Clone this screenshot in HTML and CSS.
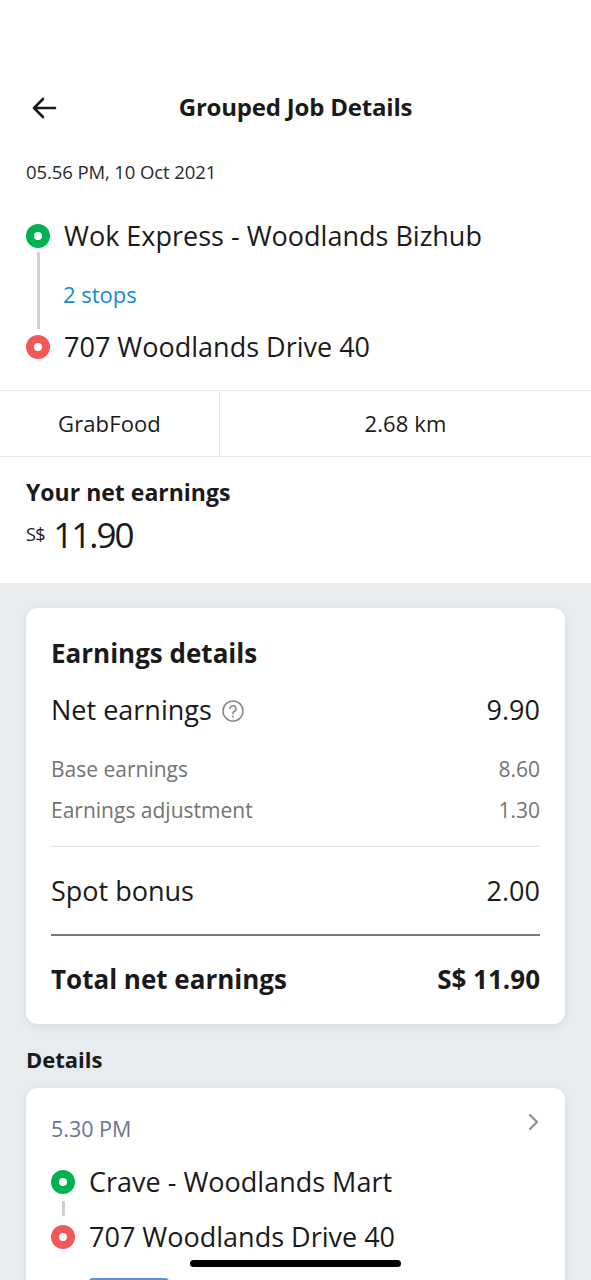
FILE: index.html
```html
<!DOCTYPE html>
<html>
<head>
<meta charset="utf-8">
<link rel="stylesheet" href="styles.css">
</head>
<body>
<div class="page">
  <div class="top">
    <div class="header">
      <div class="back">
        <svg width="26" height="22" viewBox="0 0 26 22"><path d="M24 11H3M12 2L3 11L12 20" fill="none" stroke="#1a1a1a" stroke-width="2.6" stroke-linecap="round" stroke-linejoin="round"/></svg>
      </div>
      <div class="title">Grouped Job Details</div>
      <div></div>
    </div>
    <div class="date">05.56 PM, 10 Oct 2021</div>
    <div class="route">
      <div class="stop">
        <span class="dot green"></span>
        <span class="place">Wok Express - Woodlands Bizhub</span>
      </div>
      <div class="stops-row">
        <div class="rail"><span class="line"></span></div>
        <span class="stops">2 stops</span>
      </div>
      <div class="stop">
        <span class="dot red"></span>
        <span class="place">707 Woodlands Drive 40</span>
      </div>
    </div>
    <div class="meta">
      <div class="cell service">GrabFood</div>
      <div class="cell">2.68 km</div>
    </div>
    <div class="net">
      <div class="net-label">Your net earnings</div>
      <div class="net-amount"><span class="cur">S$</span><span class="amt">11.90</span></div>
    </div>
  </div>
  <div class="grey">
    <div class="card earnings">
      <div class="card-title">Earnings details</div>
      <div class="row big first">
        <span class="lbl">Net earnings
          <svg class="help" width="24" height="24" viewBox="0 0 24 24"><circle cx="12" cy="12" r="10" fill="none" stroke="#8c8c8c" stroke-width="1.6"/><path d="M9 9.6a3 3 0 1 1 4.2 2.8c-.8.4-1.2 1-1.2 1.9v.5" fill="none" stroke="#8c8c8c" stroke-width="1.6" stroke-linecap="round"/><circle cx="12" cy="17.4" r="1" fill="#8c8c8c"/></svg>
        </span>
        <span class="val">9.90</span>
      </div>
      <div class="row small s1"><span>Base earnings</span><span>8.60</span></div>
      <div class="row small s2"><span>Earnings adjustment</span><span>1.30</span></div>
      <div class="divider light"></div>
      <div class="row big spot"><span>Spot bonus</span><span>2.00</span></div>
      <div class="divider dark"></div>
      <div class="row big total"><span>Total net earnings</span><span>S$ 11.90</span></div>
    </div>
    <div class="section-title">Details</div>
    <div class="card job">
      <div class="job-head">
        <span class="time">5.30 PM</span>
        <svg class="chev" width="14" height="20" viewBox="0 0 14 20"><path d="M4 3L11 10L4 17" fill="none" stroke="#8a8f99" stroke-width="2.2" stroke-linecap="round" stroke-linejoin="round"/></svg>
      </div>
      <div class="stop small-stop">
        <span class="dot green"></span>
        <span class="place">Crave - Woodlands Mart</span>
      </div>
      <div class="mini-rail"><span class="line"></span></div>
      <div class="stop small-stop">
        <span class="dot red"></span>
        <span class="place">707 Woodlands Drive 40</span>
      </div>
      <div class="btn-peek"></div>
    </div>
  </div>
  <div class="home-bar"></div>
</div>
</body>
</html>
```
FILE: styles.css
```css
* { box-sizing: border-box; }
html, body { margin: 0; padding: 0; }
body {
  font-family: "Open Sans", "Noto Sans", sans-serif;
  color: #1a1a1a;
  background: #e8ecef;
}
.page { width: 591px; min-height: 1280px; position: relative; overflow: hidden; }
.top { background: #fff; padding-top: 84px; padding-bottom: 27px; }
.header {
  display: grid;
  grid-template-columns: 1fr auto 1fr;
  align-items: center;
  height: 46px;
}
.back { padding-left: 31px; display: flex; align-items: center; padding-top: 2px; }
.title { font-size: 24px; font-weight: 700; letter-spacing: -0.2px; line-height: 30px; }
.date { margin-top: 30px; padding-left: 26px; font-size: 18.5px; line-height: 24px; color: #2a2a2a; letter-spacing: -0.1px; }
.route { margin-top: 36px; padding-left: 26px; }
.stop { display: flex; align-items: center; height: 32px; gap: 14px; }
.dot {
  width: 24px; height: 24px; border-radius: 50%;
  flex: 0 0 24px; position: relative;
}
.dot::after {
  content: ""; position: absolute; left: 8px; top: 8px;
  width: 8px; height: 8px; border-radius: 50%; background: #fff;
}
.green { background: #00b14f; }
.red { background: #f25858; }
.place { font-size: 27px; line-height: 32px; letter-spacing: 0; margin-top: -1px; }
.stops-row { display: flex; height: 79px; gap: 13px; }
.rail { width: 24px; display: flex; justify-content: center; padding: 0 0 2px; }
.rail .line, .mini-rail .line { width: 3px; background: #c9d1d9; display: block; height: 100%; }
.stops { font-size: 22px; line-height: 24px; color: #1b87d6; padding-top: 30px; letter-spacing: 0; }
.meta {
  margin-top: 27px;
  display: grid; grid-template-columns: 220px 1fr;
  height: 67px;
  border-top: 1.5px solid #e6e6e6; border-bottom: 1.5px solid #e6e6e6;
}
.cell { display: flex; align-items: center; justify-content: center; font-size: 22px; letter-spacing: 0.1px; padding-bottom: 2px; }
.cell.service { border-right: 1.5px solid #e6e6e6; }
.net { padding-left: 26px; margin-top: 21px; }
.net-label { font-size: 23px; font-weight: 700; line-height: 28px; letter-spacing: 0; }
.net-amount { margin-top: 6px; height: 44px; display: flex; align-items: center; gap: 8px; }
.cur { font-size: 18px; letter-spacing: -0.5px; }
.amt { font-size: 35px; letter-spacing: -2px; }
.grey { padding: 25px 26px 0; }
.card {
  background: #fff; border-radius: 12px;
  box-shadow: 0 2px 8px rgba(0,0,0,0.08);
}
.earnings { padding: 30px 25px 28px; }
.card-title { font-size: 26px; font-weight: 700; line-height: 30px; letter-spacing: 0; }
.row { display: flex; justify-content: space-between; align-items: center; }
.row.big { font-size: 27px; line-height: 34px; letter-spacing: 0; }
.row.first { margin-top: 25px; }
.lbl { display: flex; align-items: center; gap: 9px; }
.help { display: block; margin-top: 1px; }
.row.small { font-size: 21px; line-height: 26px; color: #737373; letter-spacing: 0; }
.s1 { margin-top: 29px; }
.s2 { margin-top: 15px; }
.divider.light { margin-top: 23px; height: 1px; background: #e3e3e3; }
.spot { margin-top: 27px; }
.divider.dark { margin-top: 26px; height: 2px; background: #7a7a7a; }
.row.total { margin-top: 26px; font-weight: 700; font-size: 26px; }
.section-title { margin-top: 22px; font-size: 22px; font-weight: 700; line-height: 26px; letter-spacing: 0; }
.job { margin-top: 16px; padding: 28px 25px 0; height: 220px; }
.job-head { display: flex; justify-content: space-between; align-items: flex-start; height: 26px; }
.time { font-size: 21.5px; line-height: 26px; color: #6a7690; letter-spacing: 0; }
.chev { margin-top: -4px; }
.small-stop { gap: 14px; }
.job-head + .small-stop { margin-top: 24px; }
.mini-rail { width: 24px; height: 23px; display: flex; justify-content: center; padding: 3px 0 5px; }
.btn-peek { margin: 25px 0 0 38px; width: 80px; height: 20px; background: #5b8edb; border-radius: 4px 4px 0 0; }
.home-bar {
  position: absolute; left: 190px; top: 1260px;
  width: 211px; height: 7px; border-radius: 4px; background: #000;
}
```
